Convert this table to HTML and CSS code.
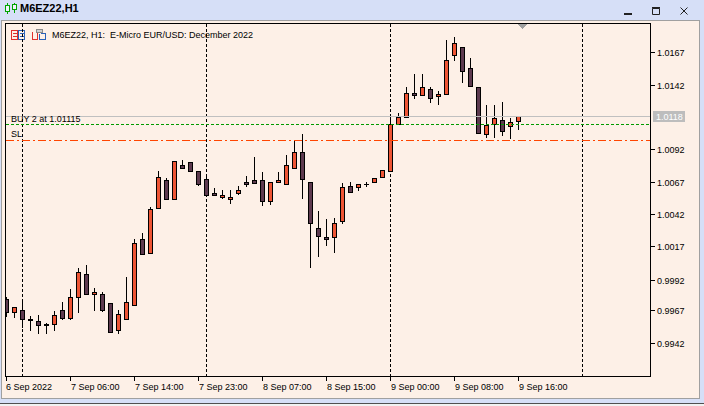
FILE: index.html
```html
<!DOCTYPE html>
<html lang="en">
<head>
<meta charset="utf-8">
<title>M6EZ22,H1</title>
<link rel="stylesheet" href="styles.css">
</head>
<body>
<div class="window">
  <div class="titlebar">
    <svg class="appicon" width="12" height="12" viewBox="0 0 12 12">
      <path class="ic-w" d="M2.5 0V11M9.5 0V10"/>
      <rect class="ic-b" x="0.5" y="2.5" width="4" height="6"/>
      <rect class="ic-b" x="7.5" y="1.5" width="4" height="5"/>
    </svg>
    <span class="title">M6EZ22,H1</span>
    <div class="buttons">
      <svg class="btn" width="8" height="8" viewBox="0 0 8 8"><rect x="0" y="6" width="8" height="2"/></svg>
      <svg class="btn" width="8" height="8" viewBox="0 0 8 8"><path class="bx" d="M0.5 1.5H7.5V7.5H0.5Z"/><rect x="0" y="0" width="8" height="1.5"/></svg>
      <svg class="btn" width="8" height="8" viewBox="0 0 8 8"><path class="bx" d="M0.5 0.5L7.5 7.5M7.5 0.5L0.5 7.5"/></svg>
    </div>
  </div>
  <div class="client">
    <svg class="chart" width="697" height="377" viewBox="2 21 697 377">
      <defs>
        <clipPath id="plot"><rect x="6" y="24" width="644" height="352"/></clipPath>
      </defs>

      <!-- header -->
      <g class="hdr">
        <rect class="i-red" x="11.5" y="30.5" width="6" height="9"/>
        <path class="i-red" d="M13 33.5H17M13 36.5H17"/>
        <rect class="i-blue" x="18.5" y="30.5" width="6" height="9"/>
        <path class="i-blue" d="M20 33.5H24M20 36.5H24"/>
        <path class="i-red" d="M32.5 31.5V39.5H37.5V32.5"/>
        <rect class="i-gray" x="36.5" y="29.5" width="6" height="3"/>
        <path class="i-blue" d="M40.5 33.5H45.5V39.5H39.5V33.5"/>
      </g>
      <text class="lbl" x="52" y="38">M6EZ22, H1:&#160; E-Micro EUR/USD: December 2022</text>

      <!-- grid -->
      <path class="grid" d="M22.5 24V376M206.5 24V376M390.5 24V376M582.5 24V376"/>

      <!-- shift marker -->
      <polygon class="shift" points="518,24 527,24 522.5,29.5"/>

      <g clip-path="url(#plot)">
        <path class="wick" d="M6.5 297V317M14.5 307V318M22.5 300V328M30.5 316V331M38.5 315V334M46.5 323V334M54.5 311V331M62.5 302V320M70.5 289V320M78.5 268V313M86.5 265V295M94.5 288V311M102.5 292V312M110.5 303V333M118.5 310V334M126.5 277V320M134.5 239V306M142.5 233V255M150.5 207V254M158.5 171V209M166.5 178V200M174.5 161V200M182.5 160V169M190.5 162V172M198.5 171V186M206.5 174V196M214.5 188V196M222.5 190V199M230.5 190V204M238.5 186V195M246.5 176V187M254.5 157V184M262.5 172V206M270.5 182V205M278.5 172V183M286.5 155V185M294.5 140V169M302.5 134V199M310.5 182V268M318.5 211V257M326.5 219V246M334.5 218V253M342.5 183V224M350.5 182V193M358.5 184V191M366.5 182V187M364 184.5H369M374.5 178V183M382.5 170V178M390.5 115V172M398.5 113V125M406.5 87V118M414.5 74V99M422.5 74V96M430.5 87V103M438.5 91V105M446.5 40V95M454.5 37V61M462.5 47V83M470.5 58V87M478.5 87V134M486.5 105V138M494.5 105V138M502.5 102V136M510.5 118V139M518.5 116V130"/>
        <rect class="dn" x="4.5" y="299.5" width="4" height="13"/>
        <rect class="up" x="12.5" y="307.5" width="4" height="5"/>
        <rect class="dn" x="20.5" y="310.5" width="4" height="9"/>
        <rect class="dn" x="28.5" y="319.5" width="4" height="1"/>
        <rect class="dn" x="36.5" y="321.5" width="4" height="4"/>
        <rect class="dn" x="44.5" y="324.5" width="4" height="1"/>
        <rect class="up" x="52.5" y="315.5" width="4" height="9"/>
        <rect class="dn" x="60.5" y="310.5" width="4" height="8"/>
        <rect class="up" x="68.5" y="297.5" width="4" height="21"/>
        <rect class="up" x="76.5" y="272.5" width="4" height="25"/>
        <rect class="dn" x="84.5" y="274.5" width="4" height="20"/>
        <rect class="up" x="92.5" y="292.5" width="4" height="2"/>
        <rect class="dn" x="100.5" y="294.5" width="4" height="16"/>
        <rect class="dn" x="108.5" y="303.5" width="4" height="29"/>
        <rect class="up" x="116.5" y="314.5" width="4" height="16"/>
        <rect class="up" x="124.5" y="302.5" width="4" height="17"/>
        <rect class="up" x="132.5" y="243.5" width="4" height="62"/>
        <rect class="dn" x="140.5" y="239.5" width="4" height="15"/>
        <rect class="up" x="148.5" y="209.5" width="4" height="44"/>
        <rect class="up" x="156.5" y="177.5" width="4" height="31"/>
        <rect class="dn" x="164.5" y="180.5" width="4" height="19"/>
        <rect class="up" x="172.5" y="161.5" width="4" height="38"/>
        <rect class="dn" x="180.5" y="165.5" width="4" height="3"/>
        <rect class="dn" x="188.5" y="162.5" width="4" height="9"/>
        <rect class="dn" x="196.5" y="171.5" width="4" height="13"/>
        <rect class="dn" x="204.5" y="179.5" width="4" height="16"/>
        <rect class="dn" x="212.5" y="193.5" width="4" height="2"/>
        <rect class="up" x="220.5" y="195.5" width="4" height="2"/>
        <rect class="up" x="228.5" y="197.5" width="4" height="2"/>
        <rect class="up" x="236.5" y="190.5" width="4" height="3"/>
        <rect class="dn" x="244.5" y="182.5" width="4" height="2"/>
        <rect class="dn" x="252.5" y="180.5" width="4" height="3"/>
        <rect class="dn" x="260.5" y="180.5" width="4" height="21"/>
        <rect class="up" x="268.5" y="182.5" width="4" height="19"/>
        <rect class="up" x="276.5" y="180.5" width="4" height="2"/>
        <rect class="up" x="284.5" y="165.5" width="4" height="19"/>
        <rect class="up" x="292.5" y="152.5" width="4" height="16"/>
        <rect class="dn" x="300.5" y="152.5" width="4" height="27"/>
        <rect class="dn" x="308.5" y="182.5" width="4" height="41"/>
        <rect class="dn" x="316.5" y="228.5" width="4" height="8"/>
        <rect class="dn" x="324.5" y="237.5" width="4" height="2"/>
        <rect class="up" x="332.5" y="223.5" width="4" height="14"/>
        <rect class="up" x="340.5" y="187.5" width="4" height="34"/>
        <rect class="dn" x="348.5" y="186.5" width="4" height="6"/>
        <rect class="up" x="356.5" y="184.5" width="4" height="3"/>
        <rect class="up" x="372.5" y="178.5" width="4" height="4"/>
        <rect class="up" x="380.5" y="170.5" width="4" height="7"/>
        <rect class="up" x="388.5" y="124.5" width="4" height="47"/>
        <rect class="up" x="396.5" y="117.5" width="4" height="7"/>
        <rect class="up" x="404.5" y="93.5" width="4" height="24"/>
        <rect class="dn" x="412.5" y="93.5" width="4" height="2"/>
        <rect class="up" x="420.5" y="87.5" width="4" height="8"/>
        <rect class="dn" x="428.5" y="89.5" width="4" height="9"/>
        <rect class="up" x="436.5" y="94.5" width="4" height="2"/>
        <rect class="up" x="444.5" y="60.5" width="4" height="34"/>
        <rect class="up" x="452.5" y="43.5" width="4" height="12"/>
        <rect class="dn" x="460.5" y="47.5" width="4" height="24"/>
        <rect class="dn" x="468.5" y="68.5" width="4" height="18"/>
        <rect class="dn" x="476.5" y="87.5" width="4" height="46"/>
        <rect class="up" x="484.5" y="125.5" width="4" height="9"/>
        <rect class="up" x="492.5" y="118.5" width="4" height="6"/>
        <rect class="dn" x="500.5" y="120.5" width="4" height="11"/>
        <rect class="up" x="508.5" y="122.5" width="4" height="4"/>
        <rect class="up" x="516.5" y="116.5" width="4" height="5"/>
      </g>

      <!-- trade levels -->
      <path class="bid" d="M6 116.5H650"/>
      <path class="buy" d="M6 124.5H650"/>
      <path class="sl" d="M6 140.5H650"/>
      <text class="lbl" x="11" y="122">BUY 2 at 1.01115</text>
      <text class="lbl" x="11" y="137">SL</text>

      <!-- frame -->
      <rect class="frame" x="5.5" y="23.5" width="645" height="353"/>

      <!-- price axis -->
      <path class="tick" d="M651 52.5H655M651 85.5H655M651 149.5H655M651 182.5H655M651 214.5H655M651 246.5H655M651 280.5H655M651 310.5H655M651 343.5H655"/>
      <text class="lbl" x="657" y="55.5">1.0167</text>
      <text class="lbl" x="657" y="88.5">1.0142</text>
      <text class="lbl" x="657" y="152.5">1.0092</text>
      <text class="lbl" x="657" y="185.5">1.0067</text>
      <text class="lbl" x="657" y="217.5">1.0042</text>
      <text class="lbl" x="657" y="249.5">1.0017</text>
      <text class="lbl" x="657" y="283.5">0.9992</text>
      <text class="lbl" x="657" y="313.5">0.9967</text>
      <text class="lbl" x="657" y="346.5">0.9942</text>
      <rect class="pricebox" x="653" y="111" width="32" height="11"/>
      <text class="lbl pricetxt" x="656" y="120">1.0118</text>

      <!-- time axis -->
      <path class="tick" d="M6.5 377V381M70.5 377V381M134.5 377V381M198.5 377V381M262.5 377V381M326.5 377V381M390.5 377V381M454.5 377V381M518.5 377V381"/>
      <text class="lbl" x="6" y="390">6 Sep 2022</text>
      <text class="lbl" x="71" y="390">7 Sep 06:00</text>
      <text class="lbl" x="135" y="390">7 Sep 14:00</text>
      <text class="lbl" x="199" y="390">7 Sep 23:00</text>
      <text class="lbl" x="263" y="390">8 Sep 07:00</text>
      <text class="lbl" x="327" y="390">8 Sep 15:00</text>
      <text class="lbl" x="391" y="390">9 Sep 00:00</text>
      <text class="lbl" x="455" y="390">9 Sep 08:00</text>
      <text class="lbl" x="519" y="390">9 Sep 16:00</text>
    </svg>
  </div>
</div>
<div class="below"></div>
</body>
</html>
```

FILE: styles.css
```css
html, body {
  margin: 0;
  padding: 0;
}

body {
  width: 704px;
  height: 406px;
  overflow: hidden;
  background: #d6dff7;
  font-family: "Liberation Sans", Arial, sans-serif;
}

.window {
  padding: 0 4px 4px 1px;
}

.titlebar {
  height: 20px;
  box-sizing: border-box;
  display: flex;
  align-items: flex-start;
  padding: 2px 0 0 4px;
}

.appicon {
  display: block;
  margin-top: 1px;
  overflow: visible;
}

.ic-w {
  stroke: #00a400;
  fill: none;
}

.ic-b {
  stroke: #00a400;
  fill: #eef3fc;
}

.title {
  margin-left: 3px;
  font-weight: bold;
  font-size: 11px;
  line-height: 13px;
  color: #000;
}

.buttons {
  margin-left: auto;
  display: flex;
  padding-right: 2px;
  margin-top: 5px;
}

.btn {
  display: block;
  margin: 0 10px;
  fill: #222;
}

.btn .bx {
  fill: none;
  stroke: #222;
  stroke-width: 1;
}

.client {
  height: 377px;
  border: 1px solid #a0a0a0;
  background: #fdf0e7;
}

.chart {
  display: block;
  shape-rendering: crispEdges;
}

.lbl {
  font-family: "Liberation Sans", Arial, sans-serif;
  font-size: 9px;
  fill: #000;
}

.pricetxt {
  fill: #ffffff;
}

.pricebox {
  fill: #bdbdbd;
}

.i-red {
  fill: none;
  stroke: #e0302c;
}

.i-blue {
  fill: none;
  stroke: #2a62b8;
}

.i-gray {
  fill: #d0d0d0;
  stroke: #8a8a8a;
}

.grid {
  stroke: #000;
  stroke-dasharray: 3 2;
  fill: none;
}

.shift {
  fill: #a0a0a0;
}

.wick {
  stroke: #000;
  fill: none;
}

.up {
  fill: #ee5535;
  stroke: #000;
}

.dn {
  fill: #5d3a4f;
  stroke: #000;
}

.bid {
  stroke: #c0c0c0;
  fill: none;
}

.buy {
  stroke: #009a00;
  stroke-dasharray: 3 2;
  fill: none;
}

.sl {
  stroke: #ff4500;
  stroke-dasharray: 8 3 2 3;
  fill: none;
}

.frame {
  fill: none;
  stroke: #000;
}

.tick {
  stroke: #000;
  fill: none;
}

.below {
  height: 2px;
  border-top: 1px solid #505050;
  background: #f2f2f2;
}
```
